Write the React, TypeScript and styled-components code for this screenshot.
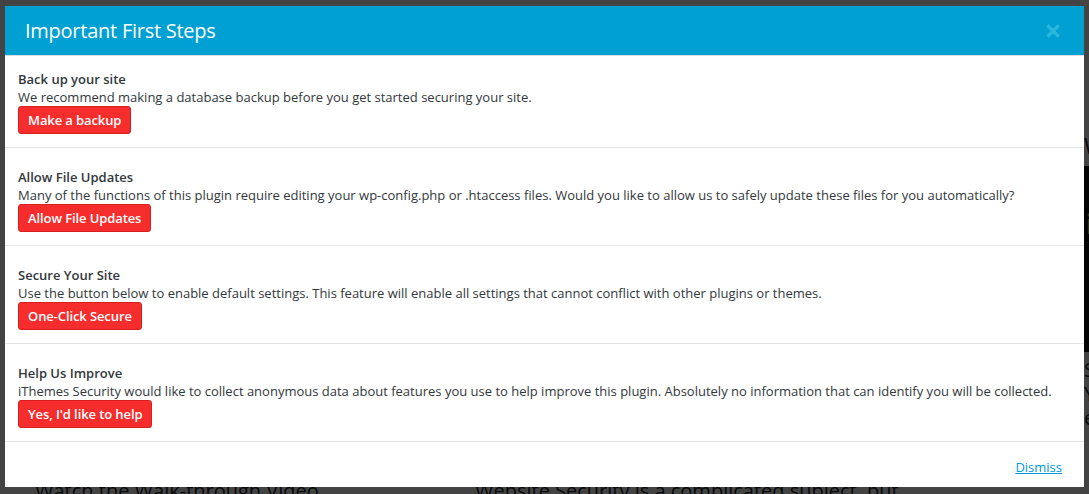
import React from 'react';
import styled, { createGlobalStyle } from 'styled-components';

const Global = createGlobalStyle`
  html, body { margin: 0; padding: 0; }
  body { font-family: "Open Sans", "Liberation Sans", sans-serif; background: #f1f1f1; overflow: hidden; }
`;

const Page = styled.div` position: relative; width: 1089px; height: 494px; overflow: hidden; background: #f1f1f1; `;
const BgTop = styled.div` display: flex; justify-content: flex-end; height: 477px; `;
const BgSide = styled.div` width: 240px; margin-right: -235px; padding-top: 130px; display: flex; flex-direction: column; gap: 6px; `;
const BgHeading = styled.div` font-size: 22px; color: #23282d; `;
const BgVideo = styled.div` height: 186px; background: #0c0c0c; color: #c8c85a; font-size: 26px; font-weight: 700; padding: 40px 0 0 2px; box-sizing: border-box; `;
const BgText = styled.div` font-size: 20px; color: #23282d; line-height: 24px; `;
const BgBottom = styled.div` display: grid; grid-template-columns: 440px 1fr; padding-left: 35px; `;
const BgTitle = styled.div` font-size: 20px; color: #23282d; white-space: nowrap; `;
const Backdrop = styled.div` position: absolute; inset: 0; background: rgba(0,0,0,0.72); `;

const Modal = styled.div`
  position: absolute; left: 5px; top: 6px; width: 1079px; height: 481px;
  background: #fff; display: flex; flex-direction: column;
`;
const Header = styled.div`
  height: 49px; background: #00a0d2; border-bottom: 1px solid #dcdcdc;
  display: flex; align-items: center; justify-content: space-between; padding: 0 24px 0 20px;
`;
const Title = styled.h1` margin: 0; font-size: 20px; font-weight: 400; color: #fff; letter-spacing: -0.25px; `;
const Close = styled.button` border: 0; background: none; padding: 0; width: 14px; height: 14px; display: flex; cursor: pointer; `;

const Section = styled.div<{ $first?: boolean }>`
  padding: ${({ $first }) => ($first ? '14px' : '20px')} 13px 13px;
  border-bottom: 1px solid #e5e5e5;
  color: #32373c; font-size: 13px; line-height: 18px;
`;
const StepTitle = styled.div` font-weight: 600; `;
const StepText = styled.div``;
const RedButton = styled.button`
  height: 28px; padding: 0 9px; border: 1px solid #d81e1e; border-radius: 3px;
  background: #f62d2d; color: #fff; font-family: inherit; font-size: 13px; font-weight: 600;
  letter-spacing: -0.1px; cursor: pointer;
`;
const Footer = styled.div` flex: 1; display: flex; align-items: center; justify-content: flex-end; padding: 4px 22px 0 0; `;
const Dismiss = styled.a` color: #0096dd; font-size: 13px; text-decoration: underline; cursor: pointer; `;

const steps = [
  { title: 'Back up your site', text: 'We recommend making a database backup before you get started securing your site.', btn: 'Make a backup' },
  { title: 'Allow File Updates', text: 'Many of the functions of this plugin require editing your wp-config.php or .htaccess files. Would you like to allow us to safely update these files for you automatically?', btn: 'Allow File Updates' },
  { title: 'Secure Your Site', text: 'Use the button below to enable default settings. This feature will enable all settings that cannot conflict with other plugins or themes.', btn: 'One-Click Secure' },
  { title: 'Help Us Improve', text: 'iThemes Security would like to collect anonymous data about features you use to help improve this plugin. Absolutely no information that can identify you will be collected.', btn: "Yes, I'd like to help" },
];

export default function App() {
  return (
    <Page>
      <Global />
      <BgTop>
        <BgSide>
          <BgHeading>Welcome</BgHeading>
          <BgVideo>iThemes</BgVideo>
          <BgText>Security<br />Your<br />easier</BgText>
        </BgSide>
      </BgTop>
      <BgBottom>
        <BgTitle>Watch the Walk-through Video</BgTitle>
        <BgTitle>Website Security is a complicated subject, but</BgTitle>
      </BgBottom>
      <Backdrop />
      <Modal>
        <Header>
          <Title>Important First Steps</Title>
          <Close aria-label="Close">
            <svg width="14" height="14" viewBox="0 0 14 14">
              <path d="M2.5 2.5 L11.5 11.5 M11.5 2.5 L2.5 11.5" stroke="#2ab8dc" strokeWidth="3.2" strokeLinecap="square" />
            </svg>
          </Close>
        </Header>
        {steps.map((s, i) => (
          <Section key={s.title} $first={i === 0}>
            <StepTitle>{s.title}</StepTitle>
            <StepText>{s.text}</StepText>
            <RedButton type="button">{s.btn}</RedButton>
          </Section>
        ))}
        <Footer>
          <Dismiss>Dismiss</Dismiss>
        </Footer>
      </Modal>
    </Page>
  );
}
